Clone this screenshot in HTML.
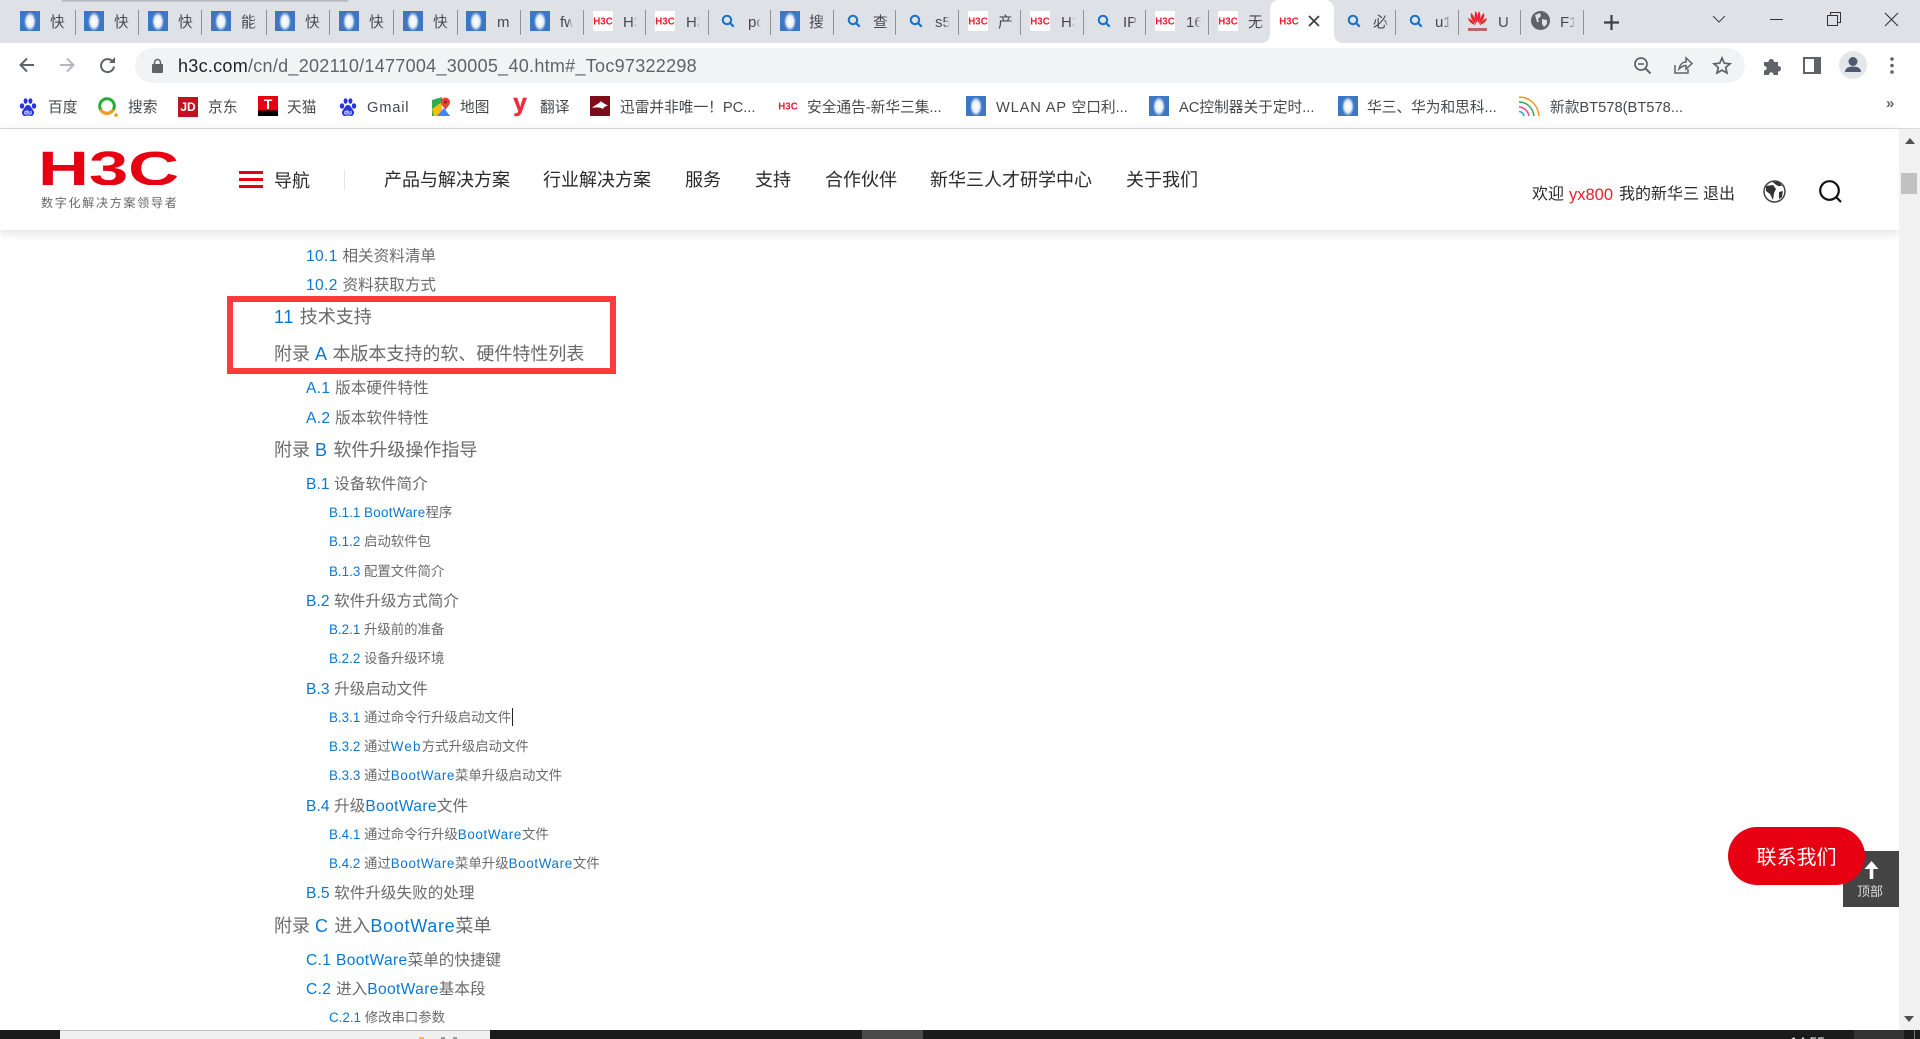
<!DOCTYPE html>
<html lang="zh-CN"><head><meta charset="utf-8"><title>H3C</title>
<style>
html,body{margin:0;padding:0;background:#fff;width:1920px;height:1039px;overflow:hidden}
body{position:relative;font-family:"Liberation Sans","Noto Sans CJK SC",sans-serif;color:#444}
div,span,svg{position:absolute;display:block}
svg.ic{overflow:visible}
i{font-style:normal;position:static;display:inline}
.strip{left:0;top:0;width:1920px;height:43px;background:#dee1e6}
.sh{left:62px;top:0;width:286px;height:2px;background:linear-gradient(#8a8c90,#dee1e6);filter:blur(.5px)}
.sep{top:10px;width:1px;height:25px;background:#8f9296}
.tt{top:12px;height:22px;line-height:22px;font-size:15px;color:#46484b;width:18px;overflow:hidden;white-space:nowrap;-webkit-mask-image:linear-gradient(90deg,#000 60%,transparent)}
.act{left:1270px;top:0;width:64px;height:43px;background:#fff;border-radius:9px 9px 0 0}
.act:before,.act:after{content:"";position:absolute;bottom:0;width:8px;height:8px;background:radial-gradient(circle at 0 0,transparent 7.5px,#fff 8px)}
.act:before{left:-8px}
.act:after{right:-8px;background:radial-gradient(circle at 100% 0,transparent 7.5px,#fff 8px)}
.pill{left:135px;top:48px;width:1610px;height:35px;border-radius:18px;background:#f1f3f4}
.url{left:178px;top:53px;height:26px;line-height:26px;font-size:18px;color:#5f6368;white-space:nowrap;letter-spacing:.28px}
.url i{color:#202124}
.line{left:0;top:128px;width:1920px;height:1px;background:#dadce0}
.bm{top:98px;height:20px;line-height:20px;font-size:14.7px;color:#46484b;white-space:nowrap}
.bm i{letter-spacing:.8px}
.hdr{left:0;top:129px;width:1899px;height:101px;background:#fff;box-shadow:0 3px 10px rgba(0,0,0,.13)}
.nav{top:168px;height:24px;line-height:24px;font-size:18px;color:#2a2a2a;white-space:nowrap}
.usr{top:184px;height:22px;line-height:22px;font-size:16px;color:#2a2a2a;white-space:nowrap}
.r{position:absolute;white-space:nowrap;height:24px;line-height:24px;color:#6a6a6a}
.r i{color:#0a78d2}
.a{left:274px;font-size:18px}
.a i{letter-spacing:.7px}
.b{left:306px;font-size:15.6px}
.b i{letter-spacing:.35px}
.b i.n{letter-spacing:.1px}
.c{left:329px;font-size:13.4px}
.c i.w{letter-spacing:.65px}
.box{left:227px;top:296px;width:377px;height:65.5px;border:6.5px solid #fd3a3c}
.sb{left:1899px;top:129px;width:21px;height:901px;background:#f1f1f1}
.thumb{left:1901px;top:173px;width:16px;height:21px;background:#c1c1c1}
.contact{left:1728px;top:827px;width:137px;height:58px;border-radius:29px;background:#e60012;color:#fff;font-size:20px;line-height:62px;text-align:center;z-index:3}
.top{left:1843px;top:851px;width:56px;height:56px;background:#444}
.bot{left:0;top:1030px;width:1920px;height:9px;background:#1b1b1b;overflow:hidden}
</style></head><body>
<svg width="0" height="0" style="position:absolute">
<defs>
<radialGradient id="dg" cx=".5" cy=".5" r=".5"><stop offset="0" stop-color="#fff"/><stop offset=".6" stop-color="#e8f0fa"/><stop offset="1" stop-color="#3f7ac8"/></radialGradient>
<symbol id="q" viewBox="0 0 20 20"><rect width="20" height="20" fill="#3c77c5"/><ellipse cx="10" cy="10.5" rx="6" ry="9.5" fill="url(#dg)"/></symbol>
<symbol id="s" viewBox="0 0 16 16"><circle cx="6.8" cy="6.8" r="4.8" fill="none" stroke="#1a73c8" stroke-width="2.4"/><path d="M10.4 10.4L14.5 14.5" stroke="#1a73c8" stroke-width="2.6"/></symbol>
<symbol id="h" viewBox="0 0 20 20"><rect width="20" height="20" fill="#fff"/><text x="10" y="13.7" text-anchor="middle" font-family="Liberation Sans" font-weight="700" font-size="10" fill="#ee1c2e" textLength="19.5" lengthAdjust="spacingAndGlyphs">H3C</text></symbol>
<symbol id="p" viewBox="0 0 18 20"><g fill="#2932e1"><ellipse cx="3" cy="9" rx="2.2" ry="2.8"/><ellipse cx="6.6" cy="4" rx="2" ry="2.8"/><ellipse cx="11.4" cy="4" rx="2" ry="2.8"/><ellipse cx="15" cy="9" rx="2.2" ry="2.8"/><path d="M9 8c3 0 3 3 5 5s1 6-2 6c-1.5 0-2-.5-3-.5s-1.5.5-3 .5c-3 0-4-4-2-6s2-5 5-5z"/></g><text x="9" y="17.5" text-anchor="middle" font-family="Liberation Sans" font-weight="700" font-size="6.5" fill="#fff">du</text></symbol>
</defs></svg>

<div class="strip"></div><div class="sh"></div>
<div class="act"></div>
<div class="sep" style="left:75px"></div><div class="sep" style="left:138px"></div><div class="sep" style="left:201px"></div><div class="sep" style="left:266px"></div><div class="sep" style="left:329px"></div><div class="sep" style="left:393px"></div><div class="sep" style="left:457px"></div><div class="sep" style="left:520px"></div><div class="sep" style="left:583px"></div><div class="sep" style="left:645px"></div><div class="sep" style="left:708px"></div><div class="sep" style="left:770px"></div><div class="sep" style="left:833px"></div><div class="sep" style="left:895px"></div><div class="sep" style="left:958px"></div><div class="sep" style="left:1020px"></div><div class="sep" style="left:1083px"></div><div class="sep" style="left:1145px"></div><div class="sep" style="left:1208px"></div><div class="sep" style="left:1395px"></div><div class="sep" style="left:1458px"></div><div class="sep" style="left:1520px"></div><div class="sep" style="left:1583px"></div>

<svg style="left:20px;top:11px" width="20" height="20"><use href="#q"/></svg><div class="tt" style="left:50px">快</div>
<svg style="left:84px;top:11px" width="20" height="20"><use href="#q"/></svg><div class="tt" style="left:114px">快</div>
<svg style="left:148px;top:11px" width="20" height="20"><use href="#q"/></svg><div class="tt" style="left:178px">快</div>
<svg style="left:211px;top:11px" width="20" height="20"><use href="#q"/></svg><div class="tt" style="left:241px">能</div>
<svg style="left:275px;top:11px" width="20" height="20"><use href="#q"/></svg><div class="tt" style="left:305px">快</div>
<svg style="left:339px;top:11px" width="20" height="20"><use href="#q"/></svg><div class="tt" style="left:369px">快</div>
<svg style="left:403px;top:11px" width="20" height="20"><use href="#q"/></svg><div class="tt" style="left:433px">快</div>
<svg style="left:466px;top:11px" width="20" height="20"><use href="#q"/></svg><div class="tt" style="left:497px">m</div>
<svg style="left:530px;top:11px" width="20" height="20"><use href="#q"/></svg><div class="tt" style="left:560px;width:13px">fw</div>
<svg style="left:593px;top:11px" width="20" height="20"><use href="#h"/></svg><div class="tt" style="left:623px;width:14px">H3</div>
<svg style="left:655px;top:11px" width="20" height="20"><use href="#h"/></svg><div class="tt" style="left:686px;width:14px">H3</div>
<svg style="left:721px;top:14px" width="14" height="14"><use href="#s"/></svg><div class="tt" style="left:748px;width:13px">pc</div>
<svg style="left:780px;top:11px" width="20" height="20"><use href="#q"/></svg><div class="tt" style="left:809px">搜</div>
<svg style="left:847px;top:14px" width="14" height="14"><use href="#s"/></svg><div class="tt" style="left:873px">查</div>
<svg style="left:909px;top:14px" width="14" height="14"><use href="#s"/></svg><div class="tt" style="left:935px;width:15px">s5</div>
<svg style="left:968px;top:11px" width="20" height="20"><use href="#h"/></svg><div class="tt" style="left:998px">产</div>
<svg style="left:1030px;top:11px" width="20" height="20"><use href="#h"/></svg><div class="tt" style="left:1061px;width:14px">H3</div>
<svg style="left:1097px;top:14px" width="14" height="14"><use href="#s"/></svg><div class="tt" style="left:1123px;width:15px">IP</div>
<svg style="left:1155px;top:11px" width="20" height="20"><use href="#h"/></svg><div class="tt" style="left:1186px;width:15px">16</div>
<svg style="left:1218px;top:11px" width="20" height="20"><use href="#h"/></svg><div class="tt" style="left:1248px">无</div>
<svg style="left:1279px;top:11px" width="20" height="20"><use href="#h"/></svg>
<svg class="ic" style="left:1309px;top:16px" width="10" height="10"><path d="M0 0L10 10M10 0L0 10" stroke="#3c4043" stroke-width="1.8"/></svg>
<svg style="left:1347px;top:14px" width="14" height="14"><use href="#s"/></svg><div class="tt" style="left:1373px">必</div>
<svg style="left:1409px;top:14px" width="14" height="14"><use href="#s"/></svg><div class="tt" style="left:1435px;width:15px">u1</div>
<svg style="left:1467px;top:10px" width="21" height="22" viewBox="0 0 21 22"><g fill="#e8222e"><path d="M10 13C7 9 7 4 9 1c1.5 3 2 8 1 12zM11 13c3-4 3-9 1-12-1.5 3-2 8-1 12z"/><path d="M9 14C5 11 3 7 4 3c2.5 2 5 7 5 11zM12 14c4-3 6-7 5-11-2.5 2-5 7-5 11z"/><path d="M8.5 15C4 14 1.5 11 1 8c3 1 6 4 7.5 7zM12.5 15c4.5-1 7-4 7.5-7-3 1-6 4-7.5 7z"/></g><rect x="1" y="18" width="19" height="3" fill="#b9676b"/></svg><div class="tt" style="left:1498px;width:14px">U</div>
<svg style="left:1531px;top:11px" width="19" height="19" viewBox="0 0 19 19"><circle cx="9.5" cy="9.5" r="9.5" fill="#5f6368"/><path d="M4 4l5-2 1 3-3 3 1 3-2 0zM11 8l5 1 0 4-3 3-2-3z" fill="#dee1e6"/></svg><div class="tt" style="left:1560px;width:15px">F1</div>
<svg class="ic" style="left:1604px;top:15px" width="15" height="15"><path d="M7.5 0V15M0 7.5H15" stroke="#3c4043" stroke-width="2.2"/></svg>
<svg class="ic" style="left:1713px;top:16px" width="12" height="6"><path d="M0 0L6 6L12 0" fill="none" stroke="#3c4043" stroke-width="1"/></svg>
<div style="left:1770px;top:19px;width:13px;height:1px;background:#333"></div>
<svg class="ic" style="left:1827px;top:12px" width="14" height="14"><path d="M.5 3.5H10.5V13.5H.5zM3.5 3.5V.5H13.5V10.5H10.5" fill="none" stroke="#333"/></svg>
<svg class="ic" style="left:1885px;top:13px" width="13" height="13"><path d="M0 0L13 13M13 0L0 13" stroke="#333" stroke-width="1.1"/></svg>

<svg class="ic" style="left:19px;top:57px" width="16" height="16"><path d="M15 8H2M8 1.5L1.5 8L8 14.5" fill="none" stroke="#5f6368" stroke-width="2"/></svg>
<svg class="ic" style="left:59px;top:57px" width="16" height="16"><path d="M1 8H14M8 1.5L14.5 8L8 14.5" fill="none" stroke="#b4b7bb" stroke-width="2"/></svg>
<svg class="ic" style="left:99px;top:57px" width="17" height="16"><path d="M14 5A6.5 6.5 0 1 0 15 9.5" fill="none" stroke="#5f6368" stroke-width="2"/><path d="M10 6H16V0z" fill="#5f6368"/></svg>
<div class="pill"></div>
<svg class="ic" style="left:152px;top:59px" width="11" height="14"><rect y="5" width="11" height="9" rx="1" fill="#5f6368"/><path d="M2.5 6V3.5a3 3 0 0 1 6 0V6" fill="none" stroke="#5f6368" stroke-width="1.5"/></svg>
<div class="url"><i>h3c.com</i>/cn/d_202110/1477004_30005_40.htm#_Toc97322298</div>
<svg class="ic" style="left:1634px;top:57px" width="17" height="17"><circle cx="7" cy="7" r="6" fill="none" stroke="#5f6368" stroke-width="1.7"/><path d="M4 7H10" stroke="#5f6368" stroke-width="1.6"/><path d="M11.5 11.5L16.5 16.5" stroke="#5f6368" stroke-width="2"/></svg>
<svg class="ic" style="left:1674px;top:57px" width="19" height="17"><path d="M1 8V16H14V12M5 12C6 7 9 5 12 5V1L18 6.5L12 12V8.5C9 8.5 7 10 5 12z" fill="none" stroke="#5f6368" stroke-width="1.5"/></svg>
<svg class="ic" style="left:1713px;top:57px" width="18" height="17"><path d="M9 1L11.3 6.2L17 6.8L12.7 10.5L14 16L9 13.1L4 16L5.3 10.5L1 6.8L6.7 6.2z" fill="none" stroke="#5f6368" stroke-width="1.7"/></svg>
<svg class="ic" style="left:1763px;top:57px" width="18" height="18"><path d="M1 5H5.5C5.5 1 11 1 11 5H15V9C19 9 19 14.5 15 14.5V18H10.5C10.5 14.5 6 14.5 6 18H1V13.5C4.5 13.5 4.5 9 1 9z" fill="#5f6368"/></svg>
<svg class="ic" style="left:1803px;top:57px" width="18" height="17"><rect width="18" height="17" fill="#5f6368"/><rect x="2" y="2" width="9" height="13" fill="#fff"/></svg>
<svg class="ic" style="left:1839px;top:51px" width="28" height="28"><circle cx="14" cy="14" r="14" fill="#e4e6ea"/><circle cx="14" cy="10.5" r="4.5" fill="#4d5a72"/><path d="M6 21c0-4 4-5.5 8-5.5s8 1.5 8 5.5z" fill="#4d5a72"/></svg>
<svg class="ic" style="left:1890px;top:57px" width="4" height="17"><circle cx="2" cy="2" r="1.8" fill="#5f6368"/><circle cx="2" cy="8.5" r="1.8" fill="#5f6368"/><circle cx="2" cy="15" r="1.8" fill="#5f6368"/></svg>

<svg style="left:19px;top:97px" width="18" height="20"><use href="#p"/></svg><div class="bm" style="left:48px">百度</div>
<svg style="left:98px;top:97px" width="20" height="20" viewBox="0 0 20 20"><circle cx="9" cy="9" r="7.3" fill="none" stroke="#23ac38" stroke-width="3"/><path d="M2.5 12.5A7.3 7.3 0 0 0 15.5 12.5" fill="none" stroke="#f39a1e" stroke-width="3"/><circle cx="18" cy="18" r="1.8" fill="#f39a1e"/></svg><div class="bm" style="left:128px">搜索</div>
<div style="left:178px;top:97px;width:20px;height:20px;background:#c1121f;color:#fff;font:700 12px/20px 'Liberation Sans';text-align:center">JD</div><div class="bm" style="left:208px">京东</div>
<div style="left:258px;top:96px;width:20px;height:20px;background:linear-gradient(#e60012 72%,#000 72%);color:#fff;font:700 14px/17px 'Liberation Sans';text-align:center">T</div><div class="bm" style="left:287px">天猫</div>
<svg style="left:339px;top:97px" width="18" height="20"><use href="#p"/></svg><div class="bm" style="left:367px"><i>Gmail</i></div>
<svg style="left:432px;top:96px" width="18" height="21" viewBox="0 0 18 21"><path d="M0 4L10 1V20L0 20z" fill="#34a853"/><path d="M0 13L10 6V20H2z" fill="#fbbc04"/><path d="M5 20L12 12L18 20z" fill="#4285f4"/><path d="M9 6a4.5 4.5 0 0 1 9 0c0 3-3 5-4.5 8C12 11 9 9 9 6z" fill="#ea4335"/><circle cx="13.5" cy="6" r="1.5" fill="#a61c1c"/></svg><div class="bm" style="left:460px">地图</div>
<div style="left:512px;top:92px;width:16px;height:24px;color:#ee2c3c;font:700 24px/24px 'Liberation Sans';text-align:center;-webkit-text-stroke:.6px #ee2c3c">y</div><div class="bm" style="left:540px">翻译</div>
<svg style="left:590px;top:96px" width="20" height="20" viewBox="0 0 20 20"><rect width="20" height="20" fill="#7f0c1c"/><path d="M2 12C6 8 9 8 11 5c1 2 5 3 7 5-3 0-4 1-5 3-3-2-7-2-11-1z" fill="#fff"/></svg><div class="bm" style="left:620px">迅雷并非唯一！PC...</div>
<svg style="left:778px;top:96px" width="20" height="20"><use href="#h"/></svg><div class="bm" style="left:807px">安全通告-新华三集...</div>
<svg style="left:966px;top:96px" width="20" height="20"><use href="#q"/></svg><div class="bm" style="left:996px"><i>WLAN AP </i>空口利...</div>
<svg style="left:1149px;top:96px" width="20" height="20"><use href="#q"/></svg><div class="bm" style="left:1179px">AC控制器关于定时...</div>
<svg style="left:1338px;top:96px" width="20" height="20"><use href="#q"/></svg><div class="bm" style="left:1367px">华三、华为和思科...</div>
<svg style="left:1519px;top:96px" width="21" height="20" viewBox="0 0 21 20"><g fill="none" stroke-width="1.5"><path d="M0 1C11 1 19 9 20 20" stroke="#f39a1e"/><path d="M0 6C8 6 14 12 15 20" stroke="#34a853"/><path d="M0 11C5 11 9 15 10 20" stroke="#e8438f"/><path d="M0 15.5C2.5 15.5 4.5 17.5 5 20" stroke="#2a9ae0"/></g></svg><div class="bm" style="left:1550px">新款BT578(BT578...</div>
<div style="left:1886px;top:93px;font-size:15px;line-height:22px;color:#5f6368;font-weight:700">»</div>
<div class="line"></div>

<div class="r b" style="top:245px"><i>10.1 </i>相关资料清单</div>
<div class="r b" style="top:274px"><i>10.2 </i>资料获取方式</div>
<div class="r a" style="top:305px"><i>11 </i>技术支持</div>
<div class="r a" style="top:342px">附录 <i>A </i>本版本支持的软、硬件特性列表</div>
<div class="r b" style="top:377px"><i>A.1 </i>版本硬件特性</div>
<div class="r b" style="top:407px"><i>A.2 </i>版本软件特性</div>
<div class="r a" style="top:438px">附录 <i>B </i>软件升级操作指导</div>
<div class="r b" style="top:473px"><i class="n">B.1 </i>设备软件简介</div>
<div class="r c" style="top:501px"><i>B.1.1 </i><i class="w" style="letter-spacing:.3px">BootWare</i>程序</div>
<div class="r c" style="top:530px"><i>B.1.2 </i>启动软件包</div>
<div class="r c" style="top:560px"><i>B.1.3 </i>配置文件简介</div>
<div class="r b" style="top:590px"><i class="n">B.2 </i>软件升级方式简介</div>
<div class="r c" style="top:618px"><i>B.2.1 </i>升级前的准备</div>
<div class="r c" style="top:647px"><i>B.2.2 </i>设备升级环境</div>
<div class="r b" style="top:678px"><i class="n">B.3 </i>升级启动文件</div>
<div class="r c" style="top:706px"><i>B.3.1 </i>通过命令行升级启动文件</div>
<div style="left:512px;top:708px;width:1px;height:18px;background:#222"></div>
<div class="r c" style="top:735px"><i>B.3.2 </i>通过<i class="w" style="letter-spacing:1.2px">Web</i>方式升级启动文件</div>
<div class="r c" style="top:764px"><i>B.3.3 </i>通过<i class="w">BootWare</i>菜单升级启动文件</div>
<div class="r b" style="top:795px"><i class="n">B.4 </i>升级<i>BootWare</i>文件</div>
<div class="r c" style="top:823px"><i>B.4.1 </i>通过命令行升级<i class="w">BootWare</i>文件</div>
<div class="r c" style="top:852px"><i>B.4.2 </i>通过<i class="w">BootWare</i>菜单升级<i class="w">BootWare</i>文件</div>
<div class="r b" style="top:882px"><i class="n">B.5 </i>软件升级失败的处理</div>
<div class="r a" style="top:914px">附录 <i>C </i>进入<i>BootWare</i>菜单</div>
<div class="r b" style="top:949px"><i>C.1 BootWare</i>菜单的快捷键</div>
<div class="r b" style="top:978px"><i>C.2 </i>进入<i>BootWare</i>基本段</div>
<div class="r c" style="top:1006px"><i>C.2.1 </i>修改串口参数</div>
<div class="box"></div>

<div class="hdr"></div>
<svg style="left:41px;top:150px" width="136" height="35" viewBox="0 0 136 35"><text transform="translate(-3 35) scale(1.47 1)" font-family="Liberation Sans" font-weight="700" font-size="48" fill="#e60012">H3C</text></svg>
<div style="left:41px;top:195px;height:17px;line-height:17px;font-size:12px;letter-spacing:1.75px;color:#666;white-space:nowrap">数字化解决方案领导者</div>
<div style="left:239px;top:171px;width:24px;height:3.4px;background:#e60012"></div>
<div style="left:239px;top:178px;width:24px;height:3.4px;background:#e60012"></div>
<div style="left:239px;top:184.5px;width:24px;height:3.4px;background:#e60012"></div>
<div class="nav" style="left:274px;top:169px">导航</div>
<div style="left:344px;top:170px;width:1px;height:20px;background:#e4e4e4"></div>
<div class="nav" style="left:384px">产品与解决方案</div>
<div class="nav" style="left:543px">行业解决方案</div>
<div class="nav" style="left:685px">服务</div>
<div class="nav" style="left:755px">支持</div>
<div class="nav" style="left:825px">合作伙伴</div>
<div class="nav" style="left:930px">新华三人才研学中心</div>
<div class="nav" style="left:1126px">关于我们</div>
<div class="usr" style="left:1532px">欢迎</div>
<div class="usr" style="left:1569px;color:#f01c26;font-size:16.5px">yx800</div>
<div class="usr" style="left:1619px">我的新华三</div>
<div class="usr" style="left:1703px">退出</div>
<svg class="ic" style="left:1763px;top:180px" width="23" height="23" viewBox="0 0 23 23"><circle cx="11.5" cy="11.5" r="10.5" fill="#fff" stroke="#444" stroke-width="1.5"/><path d="M3 6L10 5L13 9L11 13L10 20L7 14L3 11z" fill="#333"/><path d="M9 1.5L16 2L19 6L15 6L12 4z" fill="#333"/><path d="M16 12L20 11L19 17L16 19z" fill="#333"/></svg>
<svg class="ic" style="left:1819px;top:180px" width="23" height="23" viewBox="0 0 23 23"><circle cx="10.5" cy="10.5" r="9.3" fill="none" stroke="#111" stroke-width="2.2"/><path d="M17 17L22 22" stroke="#111" stroke-width="2.2"/></svg>

<div class="sb"></div><div class="thumb"></div>
<svg class="ic" style="left:1905px;top:138px" width="10" height="6"><path d="M0 6L5 0L10 6z" fill="#505050"/></svg>
<svg class="ic" style="left:1904px;top:1016px" width="10" height="6"><path d="M0 0L5 6L10 0z" fill="#505050"/></svg>

<div class="top"></div>
<svg class="ic" style="left:1864px;top:861px" width="15" height="18"><path d="M7.5 0L14.5 8H9.3V18H5.7V8H.5z" fill="#fff"/></svg>
<div style="left:1857px;top:882px;height:20px;line-height:20px;font-size:13px;color:#ddd;white-space:nowrap">顶部</div>
<div class="contact">联系我们</div>

<div class="bot">
<div style="left:60px;top:0;width:430px;height:9px;background:#f0f0f0;border-top:1px solid #c0c0c0"></div>
<div style="left:419px;top:7px;width:5px;height:2px;background:#f2c230"></div>
<div style="left:441px;top:7px;width:4px;height:2px;background:#999"></div>
<div style="left:453px;top:7px;width:4px;height:2px;background:#999"></div>
<div style="left:862px;top:0;width:61px;height:9px;background:#4a4a4a"></div>
<div style="left:1854px;top:0;width:50px;height:9px;background:#333"></div>
<div style="left:1914px;top:0;width:1px;height:9px;background:#777"></div>
<div style="left:1790px;top:5px;height:14px;line-height:14px;color:#fff;font-size:14px;white-space:nowrap">14:55</div>
</div>
</body></html>
